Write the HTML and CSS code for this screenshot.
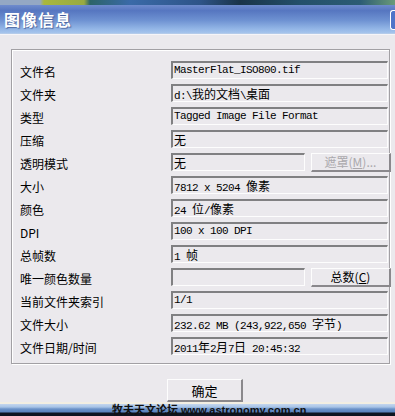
FILE: index.html
```html
<!DOCTYPE html>
<html lang="zh-CN">
<head>
    <meta charset="UTF-8">
    <title>图像信息</title>
    <link rel="stylesheet" href="styles.css">
</head>
<body>

<div class="photo"></div>

<div class="titlebar">
    <span class="title">图像信息</span>
    <span class="close-edge"></span>
</div>

<div class="dialog">
    <div class="group">
        <div class="label">文件名</div>
        <div class="field">MasterFlat_ISO800.tif</div>

        <div class="label">文件夹</div>
        <div class="field">d:\<span class="cn">我的文档</span>\<span class="cn">桌面</span></div>

        <div class="label">类型</div>
        <div class="field">Tagged Image File Format</div>

        <div class="label">压缩</div>
        <div class="field"><span class="cn">无</span></div>

        <div class="label">透明模式</div>
        <div class="field-row">
            <div class="field short"><span class="cn">无</span></div>
            <button class="btn" disabled>遮罩(<u>M</u>)...</button>
        </div>

        <div class="label">大小</div>
        <div class="field">7812 x 5204 <span class="cn">像素</span></div>

        <div class="label">颜色</div>
        <div class="field">24 <span class="cn">位</span>/<span class="cn">像素</span></div>

        <div class="label">DPI</div>
        <div class="field">100 x 100 DPI</div>

        <div class="label">总帧数</div>
        <div class="field">1 <span class="cn">帧</span></div>

        <div class="label">唯一颜色数量</div>
        <div class="field-row">
            <div class="field short"></div>
            <button class="btn">总数(<u>C</u>)</button>
        </div>

        <div class="label">当前文件夹索引</div>
        <div class="field">1/1</div>

        <div class="label">文件大小</div>
        <div class="field">232.62 MB (243,922,650 <span class="cn">字节</span>)</div>

        <div class="label">文件日期/时间</div>
        <div class="field">2011<span class="cn">年</span>2<span class="cn">月</span>7<span class="cn">日</span> 20:45:32</div>
    </div>

    <div class="actions">
        <button class="btn ok">确定</button>
    </div>
</div>

<div class="footer">
    <span class="watermark">牧夫天文论坛 www.astronomy.com.cn</span>
</div>

</body>
</html>
```

FILE: styles.css
```css
html, body {
    margin: 0;
    padding: 0;
}
body {
    width: 395px;
    height: 416px;
    overflow: hidden;
    background-color: #ebe9ed;
    font-family: "Noto Sans CJK SC", "Liberation Sans", sans-serif;
    font-size: 12px;
    color: #000;
}
.photo {
    height: 5px;
    background: linear-gradient(to right, #94a8c4 0, #94a8c4 40px, #a9b83c 44px, #98aa40 84px, #2c6468 90px, #3a6aa8 130px, #2e5488 200px, #1a3448 240px, #24506a 300px, #2c5c74 360px, #6a9a78 395px);
}
.titlebar {
    height: 28px;
    display: flex;
    align-items: center;
    justify-content: space-between;
    background: linear-gradient(to bottom, #6f8ccd 0, #5676c0 20%, #6e92d2 55%, #93b6e6 85%, #a6c4ec 100%);
    border-bottom: 1px solid #b4cbea;
}
.title {
    padding-left: 4px;
    color: #fff;
    font-size: 16px;
    font-weight: bold;
    letter-spacing: 1px;
    text-shadow: 1px 1px 1px rgba(40, 60, 120, 0.6);
}
.close-edge {
    width: 4px;
    height: 18px;
    margin-top: 2px;
    border: 1px solid #fff;
    border-right: none;
    border-radius: 3px 0 0 3px;
    background-color: #4f74c8;
}
.dialog {
    padding-top: 14px;
    border-top: 1px solid #f6f5f8;
}
.group {
    box-sizing: border-box;
    width: 379px;
    margin-left: 11px;
    padding: 11px 1px 8px 8px;
    border: 1px solid #a2a0a4;
    box-shadow: inset 1px 1px 0 #fff, 1px 1px 0 #fff;
    display: grid;
    grid-template-columns: 151px 1fr;
    grid-auto-rows: 18px;
    row-gap: 5px;
}
.label {
    display: flex;
    align-items: center;
    padding-top: 3px;
    white-space: nowrap;
}
.field {
    box-sizing: border-box;
    height: 18px;
    padding-left: 1px;
    border-style: solid;
    border-width: 2px 1px 1px 2px;
    border-color: #808082 #fdfdfd #fdfdfd #808082;
    background-color: #ebe9ed;
    font-family: "Liberation Mono", "Noto Sans CJK SC", monospace;
    font-size: 11px;
    letter-spacing: -0.6px;
    line-height: 15px;
    white-space: nowrap;
    overflow: hidden;
}
.cn {
    font-family: "Noto Sans CJK SC", sans-serif;
    font-size: 12px;
    letter-spacing: 0;
}
.field-row {
    display: flex;
    align-items: center;
    gap: 6px;
    margin-right: -3px;
}
.field.short {
    width: 134px;
}
.btn {
    box-sizing: border-box;
    flex: 1;
    height: 19px;
    padding: 0;
    border-style: solid;
    border-width: 1px 2px 2px 1px;
    border-color: #fdfdfd #8a888c #8a888c #fdfdfd;
    background-color: #ebe9ed;
    font-family: "Noto Sans CJK SC", sans-serif;
    font-size: 12px;
    line-height: 15px;
    color: #000;
}
.btn:disabled {
    color: #aaa8ac;
}
.actions {
    padding: 15px 0 0 167px;
    height: 23px;
}
.btn.ok {
    width: 76px;
    height: 23px;
    font-size: 13px;
}
.footer {
    height: 15px;
    padding-left: 112px;
    background: linear-gradient(to bottom, #f2eee2 0, #f2eee2 2px, #c4d6ee 2px, #a8c4e6 5px, #6a92c8 7px, #5a82bc 10px, #0e1420 11px, #0e1420 15px);
    overflow: hidden;
}
.watermark {
    display: block;
    margin-top: 1px;
    font-family: "Liberation Sans", "Noto Sans CJK SC", sans-serif;
    font-size: 11px;
    font-weight: bold;
    line-height: 14px;
    color: #101010;
    white-space: nowrap;
}
```
